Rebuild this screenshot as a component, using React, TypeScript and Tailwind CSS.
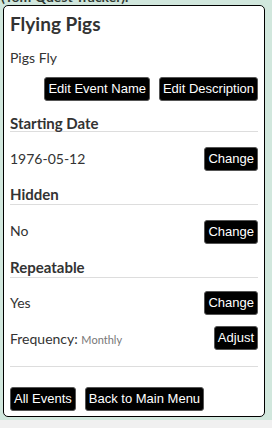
import { FC, ReactNode } from "react"

const Btn: FC<{ children: ReactNode }> = ({ children }) => (
  <button className="bg-black text-white font-['Liberation_Sans',Arial,sans-serif] text-[13px] leading-[16px] px-[3px] py-[3px] rounded-[3px] border border-[#555] whitespace-nowrap">
    {children}
  </button>
)

const Heading: FC<{ children: ReactNode; className?: string }> = ({ children, className }) => (
  <div className={`text-[15px] leading-[16px] font-bold text-[#333] border-b border-[#dddddd] ${className ?? ""}`}>
    {children}
  </div>
)

const App: FC = () => {
  return (
    <div className="w-[272px] h-[428px] bg-[#d1e7dd] flex flex-col overflow-hidden font-['Lato',sans-serif]">
      {/* cut-off page title */}
      <div className="-mt-[11px] h-[16px] px-[1px] text-[14px] leading-[16px] font-bold text-[#2f3a33]">
        (Tom Quest Tracker).
      </div>

      {/* Event card */}
      <div className="ml-[3px] w-[262px] h-[412px] border border-black rounded-[5px] bg-white px-[6px] flex flex-col">
        <h2 className="mt-[7px] text-[19px] leading-[22px] font-bold text-[#333]">Flying Pigs</h2>
        <p className="mt-[15px] text-[14px] leading-[16px] text-[#333]">Pigs Fly</p>
        <div className="mt-[11px] flex justify-end gap-[9px]">
          <Btn>Edit Event Name</Btn>
          <Btn>Edit Description</Btn>
        </div>

        {/* Starting Date */}
        <Heading className="mt-[14px]">Starting Date</Heading>
        <div className="h-[54px] flex items-center justify-between text-[14px] text-[#333]">
          <span className="-mt-[2px]">1976-05-12</span>
          <Btn>Change</Btn>
        </div>

        {/* Hidden */}
        <Heading className="pb-[2px]">Hidden</Heading>
        <div className="h-[54px] flex items-center justify-between text-[14px] text-[#333]">
          <span className="-mt-[3px]">No</span>
          <Btn>Change</Btn>
        </div>

        {/* Repeatable */}
        <Heading className="pb-[2px]">Repeatable</Heading>
        <div className="mt-[13px] flex items-center justify-between text-[14px] text-[#333]">
          <span className="-mt-[2px]">Yes</span>
          <Btn>Change</Btn>
        </div>
        <div className="mt-[11px] flex items-center justify-between text-[14px] text-[#333]">
          <span>
            Frequency: <span className="text-[11px] text-[#777]">Monthly</span>
          </span>
          <Btn>Adjust</Btn>
        </div>
        <div className="mt-[16px] border-b border-[#dddddd]" />

        <div className="mt-[20px] flex gap-[9px]">
          <Btn>All Events</Btn>
          <Btn>Back to Main Menu</Btn>
        </div>
      </div>

      <div className="mt-[3px] flex-1 bg-[#f0f0f0]" />
    </div>
  )
}

export default App
